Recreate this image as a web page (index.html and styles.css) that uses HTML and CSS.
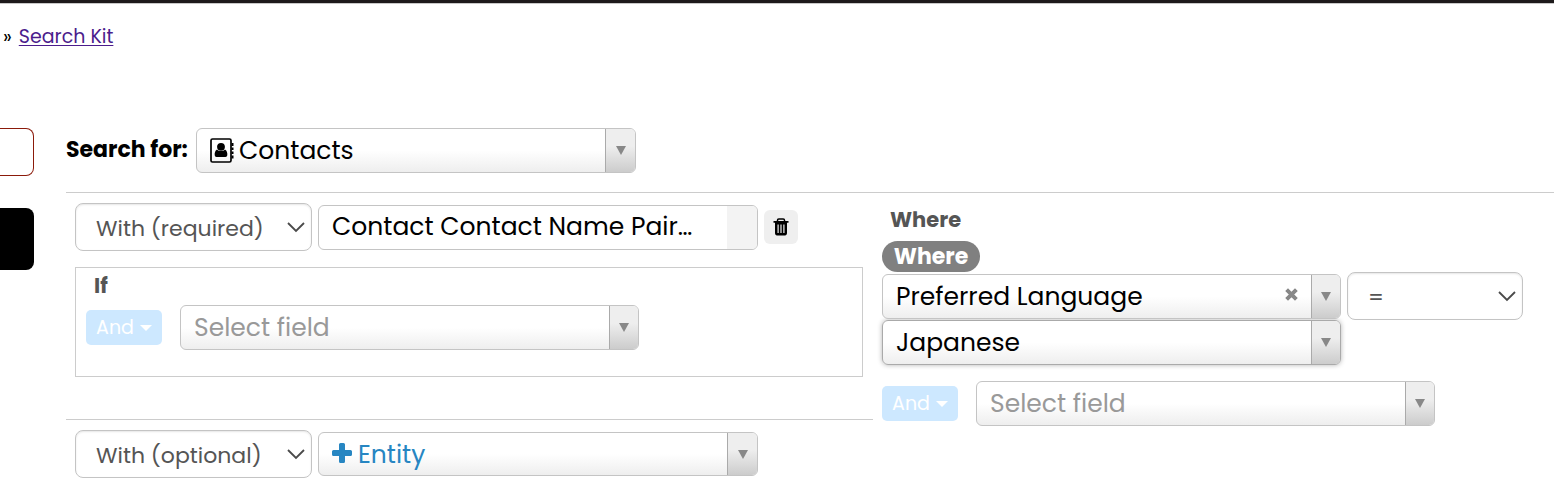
FILE: index.html
```html
<!DOCTYPE html>
<html lang="en">
<head>
<meta charset="utf-8">
<title>Search Kit</title>
<link rel="stylesheet" href="styles.css">
</head>
<body>
<svg class="defs" aria-hidden="true">
  <symbol id="triangle" viewBox="0 0 10 9"><path d="M0 0h10L5 9z" fill="#888"/></symbol>
  <symbol id="chevron" viewBox="0 0 18 11"><path d="M1 1l8 8 8-8" fill="none" stroke="#4a4a4a" stroke-width="1.8"/></symbol>
  <symbol id="caret" viewBox="0 0 12 6"><path d="M0 0h12L6 6z" fill="#fff"/></symbol>
</svg>
<header class="topbar"></header>
<nav class="breadcrumb" aria-label="Breadcrumb">
  <span>»</span>
  <a href="#search-kit">Search Kit</a>
</nav>
<div class="page">
  <aside class="sidebar">
    <div class="tab"></div>
    <div class="tab tab-active"></div>
  </aside>
  <main class="main">
    <div class="search-row">
      <label class="search-label" for="entity">Search for:</label>
      <div class="combo">
        <svg class="book" viewBox="0 0 24 26" aria-hidden="true">
          <rect x="1" y="1" width="20" height="23" rx="1.5" fill="none" stroke="#000" stroke-width="1.7"/>
          <path d="M21.500 5H23.500v3h-2zM21.500 9.500H23.500v2.500h-2zM21.500 13.500H23.500V16h-2zM21.500 17.500H23.500v3h-2z" fill="#000"/>
          <circle cx="11" cy="8.800" r="3.900" fill="#000"/>
          <path d="M7 11.500c-2 1-2.500 3.500-2.300 5.500.1 1.300.8 2 1.800 2h9c1 0 1.700-.7 1.800-2 .2-2-.3-4.500-2.300-5.500-2.200 2-5.800 2-8 0z" fill="#000"/>
        </svg>
        <select id="entity"><option>Contacts</option></select>
        <span class="arrow"><svg class="triangle"><use href="#triangle"/></svg></span>
      </div>
    </div>
    <div class="criteria">
      <section class="joins">
        <div class="join">
          <div class="join-row">
            <div class="picker">
              <select aria-label="Join type"><option>With (required)</option></select>
              <svg class="chevron"><use href="#chevron"/></svg>
            </div>
            <div class="combo combo-locked">
              <select aria-label="Joined entity" disabled><option>Contact Contact Name Pair…</option></select>
              <span class="arrow"></span>
            </div>
            <button class="trash" type="button" aria-label="Remove">
              <svg class="trash-icon" viewBox="0 0 16 18" aria-hidden="true">
                <path d="M4.500 3.500V2.300C4.500 1.400 5 1 5.800 1h4.400c.8 0 1.300.4 1.300 1.300v1.200" fill="none" stroke="#000" stroke-width="1.500"/>
                <path fill-rule="evenodd" d="M.5 3h15v1.800H14V15c0 1.500-.8 2.500-2 2.500H4c-1.200 0-2-1-2-2.500V4.800H.5zM4.500 6.500v8.500h1.200V6.500zm2.900 0v8.500h1.200V6.500zm2.900 0v8.500h1.200V6.500z" fill="#000"/>
              </svg>
            </button>
          </div>
          <div class="conditions" role="group" aria-labelledby="if-title">
            <div class="group-title" id="if-title">If</div>
            <div class="add-row">
              <button class="and" type="button">And <svg class="caret"><use href="#caret"/></svg></button>
              <div class="combo combo-wide placeholder">
                <select aria-label="Add if condition"><option>Select field</option></select>
                <span class="arrow"><svg class="triangle"><use href="#triangle"/></svg></span>
              </div>
            </div>
          </div>
        </div>
        <div class="join join-new">
          <div class="join-row">
            <div class="picker">
              <select aria-label="New join type"><option>With (optional)</option></select>
              <svg class="chevron"><use href="#chevron"/></svg>
            </div>
            <div class="combo combo-add">
              <svg class="plus" viewBox="0 0 20 20" aria-hidden="true"><path d="M8.500 0h3a1.500 1.500 0 0 1 1.500 1.500V7h5.500A1.500 1.500 0 0 1 20 8.500v3a1.500 1.500 0 0 1-1.500 1.500H13v5.500a1.500 1.500 0 0 1-1.500 1.500h-3A1.500 1.500 0 0 1 7 18.500V13H1.500A1.500 1.500 0 0 1 0 11.500v-3A1.500 1.500 0 0 1 1.500 7H7V1.500A1.500 1.500 0 0 1 8.500 0z" fill="#2786c2"/></svg>
              <select aria-label="Add entity"><option>Entity</option></select>
              <span class="arrow"><svg class="triangle"><use href="#triangle"/></svg></span>
            </div>
          </div>
        </div>
      </section>
      <section class="where" role="group" aria-labelledby="where-title">
        <div class="group-title" id="where-title">Where</div>
        <span class="badge">Where</span>
        <div class="clause">
          <div class="combo combo-wide">
            <select aria-label="Field"><option>Preferred Language</option></select>
            <button class="clear" type="button" aria-label="Clear field">
              <svg class="clear-icon" viewBox="0 0 12 12" aria-hidden="true"><path d="M1.500 1.500l9 9M10.500 1.500l-9 9" stroke="#888" stroke-width="3.600"/></svg>
            </button>
            <span class="arrow"><svg class="triangle"><use href="#triangle"/></svg></span>
          </div>
          <div class="picker picker-operator">
            <select aria-label="Operator"><option>=</option></select>
            <svg class="chevron"><use href="#chevron"/></svg>
          </div>
        </div>
        <div class="combo combo-wide combo-focus">
          <select aria-label="Value"><option>Japanese</option></select>
          <span class="arrow"><svg class="triangle"><use href="#triangle"/></svg></span>
        </div>
        <div class="add-row">
          <button class="and" type="button">And <svg class="caret"><use href="#caret"/></svg></button>
          <div class="combo combo-wide placeholder">
            <select aria-label="Add where condition"><option>Select field</option></select>
            <span class="arrow"><svg class="triangle"><use href="#triangle"/></svg></span>
          </div>
        </div>
      </section>
    </div>
  </main>
</div>
</body>
</html>
```
FILE: styles.css
```css
* { box-sizing: border-box; }
body {
  margin: 0;
  background: #fff;
  color: #000;
  font-family: Poppins, Inter, "Liberation Sans", sans-serif;
  font-size: 22px;
  overflow: hidden;
}
.defs { display: none; }
.topbar { height: 4px; background: #1d1a1b; border-bottom: 1px solid #c8c8c8; }
.breadcrumb {
  display: flex;
  gap: 7px;
  padding: 19px 3px 0;
  font-size: 19px;
  line-height: 28px;
}
.breadcrumb a { color: #4b1c8c; text-decoration-thickness: 1px; text-underline-offset: 2px; }
.page { display: flex; gap: 32px; margin-top: 77px; }

.sidebar { width: 34px; flex: none; display: flex; flex-direction: column; gap: 32px; }
.tab { height: 48px; border: 1px solid #8b1a0a; border-left: 0; border-radius: 0 8px 8px 0; }
.tab-active { height: 62px; background: #000; border: 0; }

.main { flex: 1; min-width: 0; }
.search-row { display: flex; align-items: center; gap: 7px; padding-bottom: 19px; }
.search-label { width: 123px; font-weight: 700; white-space: nowrap; line-height: 42px; padding-bottom: 1px; }

.combo {
  display: flex;
  align-items: stretch;
  width: 440px;
  max-width: 100%;
  height: 45px;
  border: 1px solid #c4c4c4;
  border-radius: 6px;
  background: linear-gradient(to top, #eee 0%, #fff 50%);
  overflow: hidden;
}
.combo-wide { width: 459px; }
select {
  appearance: none;
  flex: 1;
  min-width: 0;
  border: 0;
  background: transparent;
  font-family: inherit;
  color: inherit;
  opacity: 1;
  outline: 0;
}
.combo select { padding: 0 13px; font-size: 25px; }
.arrow {
  display: flex;
  align-items: center;
  justify-content: center;
  width: 30px;
  flex: none;
  border-left: 1px solid #aaa;
  background: linear-gradient(to top, #ccc 0%, #eee 60%);
}
.combo-wide .arrow { width: 29px; }
.triangle { width: 10px; height: 9px; }
.book { width: 24px; height: 26px; margin: 9px 0 0 13px; flex: none; }
.book + select { padding-left: 5px; }
.plus { width: 20px; height: 20px; margin: 10px 0 0 13px; flex: none; }
.plus + select { padding-left: 6px; }
.combo-add { height: 44px; color: #2786c2; }
.combo-locked { background: #fff; }
.combo-locked select { padding-bottom: 2px; }
.combo-locked .arrow { border-left: 0; background: #f3f3f3; }
.combo-focus { border-color: #aaa; box-shadow: 0 0 5px rgba(0, 0, 0, .3); }
.placeholder { color: #999; }
.clear { border: 0; padding: 0 13px 4px; background: transparent; display: flex; align-items: center; }
.clear-icon { width: 13px; height: 13px; }

.picker {
  display: flex;
  align-items: center;
  width: 237px;
  height: 48px;
  padding: 0 6px 0 20px;
  border: 1px solid #c4c4c4;
  border-radius: 8px;
  box-shadow: inset 0 1px 2px rgba(0, 0, 0, .1);
  color: #555;
}
.picker select { font-size: 22px; padding: 2px 0 0; height: 46px; }
.picker-operator { width: 176px; }
.chevron { width: 18px; height: 11px; flex: none; }

.criteria {
  display: grid;
  grid-template-columns: minmax(0, 807fr) minmax(0, 681fr);
  border-top: 1px solid #ccc;
}
.join { padding: 10px 10px 42px 9px; }
.join-new { border-top: 1px solid #ccc; padding-bottom: 0; }
.join-row { display: flex; align-items: center; gap: 6px; }
.trash {
  display: flex;
  align-items: center;
  justify-content: center;
  width: 34px;
  height: 34px;
  padding: 0;
  border: 0;
  border-radius: 6px;
  background: #efefef;
}
.trash-icon { width: 16px; height: 18px; }
.conditions { margin-top: 16px; padding: 1px 10px 26px; border: 1px solid #ccc; }
.group-title { padding-left: 8px; font-size: 21px; font-weight: 700; line-height: 34px; padding-bottom: 2px; color: #555; }
.add-row { display: flex; align-items: center; gap: 18px; }
.and {
  display: flex;
  align-items: center;
  justify-content: center;
  gap: 6px;
  width: 76px;
  height: 35px;
  flex: none;
  padding: 0;
  border: 0;
  border-radius: 5px;
  background: #cde8ff;
  color: #fff;
  font-family: inherit;
  font-size: 19px;
}
.caret { width: 12px; height: 6px; }

.where { padding: 10px 9px 0; }
.badge {
  display: block;
  width: 98px;
  margin-top: 2px;
  border-radius: 16px;
  background: #808080;
  color: #fff;
  font-weight: 700;
  line-height: 31px;
  text-align: center;
}
.clause { display: flex; align-items: center; gap: 6px; }
.where .add-row { margin-top: 16px; }
```
